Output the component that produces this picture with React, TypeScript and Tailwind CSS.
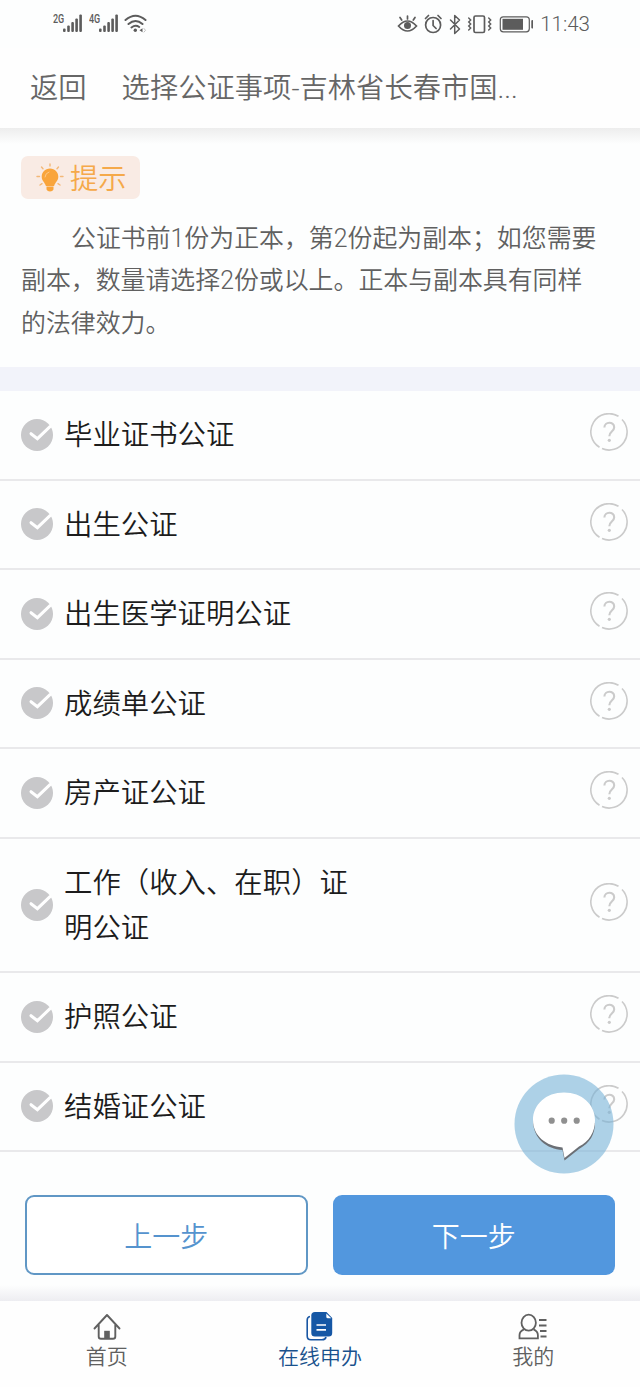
const SANS = "font-[Roboto,'Noto_Sans_CJK_SC',sans-serif]";

function Signal() {
  return (
    <svg width="22" height="20" viewBox="0 0 22 20" fill="#5c5c5c">
      <rect x="1" y="15.500" width="2.600" height="3.500" rx="1" />
      <rect x="5.200" y="12.500" width="2.600" height="6.500" rx="1" />
      <rect x="9.300" y="9" width="2.600" height="10" rx="1" />
      <rect x="13.300" y="5.500" width="2.600" height="13.500" rx="1" />
      <rect x="17.300" y="1.500" width="2.600" height="17.500" rx="1" />
    </svg>
  );
}

function StatusBar() {
  return (
    <div className="flex h-12 shrink-0 items-start justify-between pl-[53px] pr-[50px] pt-[13px] text-[#5c5c5c]">
      <div className="flex">
        <span className="w-[9px] origin-left scale-x-[0.75] text-[12px] font-medium leading-[12px]">2G</span>
        <Signal />
        <span className="ml-[5px] w-[9px] origin-left scale-x-[0.75] text-[12px] font-medium leading-[12px]">4G</span>
        <Signal />
        <svg className="ml-[4px]" width="24" height="22" viewBox="0 0 24 22" fill="none" stroke="#5c5c5c" strokeWidth="2" strokeLinecap="round">
          <path d="M1.500 7Q11.500-1.500 21.500 7M4.500 11Q11.500 5 18.500 11M7.500 14.500Q11.500 11.300 15.200 14" />
          <circle cx="11.300" cy="17.300" r="1.700" fill="#5c5c5c" stroke="none" />
          <path d="m15.500 17.300 3-2v4Z" fill="#5c5c5c" stroke="none" />
          <path d="m20 15.500 1.500 1.800-1.500 1.800" strokeWidth="0.800" stroke="#b0b0b0" />
        </svg>
      </div>
      <div className="flex">
        <svg width="136" height="24" viewBox="397.500 12.500 136 24" fill="none" stroke="#5c5c5c" strokeWidth="1.700" strokeLinecap="round">
          <path d="M399 25.500q9-10 18 0q-9 10-18 0ZM408 15.500v3M400.500 17l1.700 2.500M415.500 17l-1.700 2.500" />
          <circle cx="408" cy="25" r="3.500" fill="#5c5c5c" stroke="none" />
          <circle cx="433.600" cy="24.500" r="7.500" />
          <path d="M433.600 20v5l3 3M426 18l3-3M438.500 15l3 3" />
          <path d="m451 19.500 9 9-4.800 4.500V15l4.800 4.500-9 9" strokeWidth="1.500" strokeLinejoin="round" />
          <rect x="474.500" y="15.500" width="10.500" height="16.500" rx="1.500" />
          <path d="m469.200 17.500 2 2-2 2 2 2-2 2 2 2-2 2M489.200 17.500l2 2-2 2 2 2-2 2 2 2-2 2" strokeWidth="1.400" />
          <rect x="500.800" y="16.300" width="29" height="15" rx="3" strokeWidth="1.200" />
          <rect x="503" y="18.300" width="20.500" height="11" fill="#5c5c5c" stroke="none" />
          <path d="M532.800 20.500v6.500" strokeWidth="2" />
        </svg>
        <span className="ml-[7px] text-[20.500px] leading-[23px]">11:43</span>
      </div>
    </div>
  );
}

function Bulb() {
  return (
    <svg width="28" height="30" viewBox="0 0 28 30">
      <path d="M14 5.500c-5 0-8.300 3.700-8.300 8.200 0 4.100 3.200 5.700 4.200 9.300h8.200c1-3.600 4.200-5.200 4.200-9.300 0-4.500-3.300-8.200-8.300-8.200ZM10.500 23.500h7v3q-1 2-3.500 2t-3.500-2Z" fill="#f9a53c" />
      <path d="M9 14q.3-4 4-5" fill="none" stroke="#fcc98a" strokeLinecap="round" />
      <path d="M14 1v2M5.500 4l1.500 1.800M22.500 4 21 5.800M1 13.500h2.500M24.500 13.500H27M4 22l2-1.300M24 22l-2-1.300" stroke="#f3b878" strokeWidth="1.400" strokeLinecap="round" />
    </svg>
  );
}

function CheckCircle() {
  return (
    <svg className="shrink-0" width="32" height="32" viewBox="0 0 32 32">
      <circle cx="16" cy="16" r="16" fill="#c8c8ca" />
      <path d="m10 14.700 6.400 5L29 7.700" fill="none" stroke="#fff" strokeWidth="3" strokeLinecap="round" />
    </svg>
  );
}

function Help() {
  return (
    <svg className="shrink-0" width="38" height="38" viewBox="0 0 38 38" fill="none" stroke="#cbcbcb" strokeWidth="1.600">
      <path d="M28.500 3.300A18 18 0 0 0 9.500 34.300M12 35.600A18 18 0 0 0 32 6.500" />
      <path d="M14.400 14.500c0-6.200 9.800-6.200 9.800-.3 0 4.400-4.900 4.400-4.900 9" strokeWidth="2.100" />
      <circle cx="19.300" cy="27.300" r="1.600" fill="#cbcbcb" stroke="none" />
    </svg>
  );
}

function Item({ lines }: { lines: string[] }) {
  return (
    <div className="flex items-center border-b-2 border-[#e9e9eb] pl-[21px] pr-3">
      <CheckCircle />
      <div className="ml-[11px] flex-1 whitespace-nowrap pb-[20.5px] pt-[22px] text-[28.4px] leading-[45px] text-[#1c1c1c]">
        {lines.map((line) => (
          <div key={line}>{line}</div>
        ))}
      </div>
      <div className="-mt-[5px]">
        <Help />
      </div>
    </div>
  );
}

function ChatButton() {
  return (
    <button className="absolute left-[514px] top-[1074px] h-[100px] w-[100px]" aria-label="在线客服">
      <svg width="100" height="100" viewBox="0 0 100 100">
        <circle cx="50" cy="50" r="49.500" fill="#78b3d7" fillOpacity="0.600" />
        <path d="M19 46c0 19 14 29 29.500 30l2 10.500L65 75c11-6 16-15 16-26Z" fill="#6b6f75" />
        <path d="M50 18.500c-18 0-31 12-31 27.500 0 16 13 26 29.500 27.500l2 10.500L65 72.500c10-5 16-14 16-26.500 0-15.500-13-27.500-31-27.500Z" fill="#fff" />
        <g fill="#909090">
          <circle cx="37.700" cy="46.700" r="3.100" />
          <circle cx="50.200" cy="46.700" r="3.100" />
          <circle cx="62.700" cy="46.700" r="3.100" />
        </g>
      </svg>
    </button>
  );
}

function HomeIcon() {
  return (
    <svg width="30" height="30" viewBox="0 0 30 30" fill="none" stroke="#606060" strokeWidth="1.900" strokeLinejoin="round" strokeLinecap="round">
      <path d="M2.500 17.500 15 4l12.500 13.500M6.700 14v11.500q0 2.300 2.300 2.300h12q2.300 0 2.300-2.300V14" />
      <path d="M12.200 27.500v-7.700h5.600v7.700Z" fill="#606060" stroke="none" />
    </svg>
  );
}

function DocsIcon() {
  return (
    <svg width="30" height="30" viewBox="0 0 30 30" fill="none">
      <path d="M5 5.500q-2.800.5-2.800 3.500v16q0 3.700 3.700 3.700H17q3.500 0 4-2.700" stroke="#1956a3" strokeWidth="1.600" />
      <path d="M10 1h11.500l5.700 6v15q0 3.500-3.500 3.500H10q-3.700 0-3.700-3.500V4.500Q6.300 1 10 1Z" fill="#1557a5" />
      <path d="M21.300 2.500v3.200q0 1.500 1.500 1.500h3.500Z" fill="#fff" />
      <path d="M11.500 14h9.500M11.500 18.800h9.500" stroke="#fff" strokeWidth="1.700" />
    </svg>
  );
}

function MeIcon() {
  return (
    <svg width="30" height="30" viewBox="0 0 30 30" fill="none" stroke="#606060" strokeWidth="1.800">
      <ellipse cx="10.700" cy="11.700" rx="7.200" ry="8" />
      <path d="M6 18.300q-4.500 1.700-4.500 6v3h18.400v-3q0-4.300-4.400-6M21 9h7.500M21 14.500h7.500M22 20h6.500M22.500 25.500h6" />
    </svg>
  );
}

const items = [
  ["毕业证书公证"],
  ["出生公证"],
  ["出生医学证明公证"],
  ["成绩单公证"],
  ["房产证公证"],
  ["工作（收入、在职）证", "明公证"],
  ["护照公证"],
  ["结婚证公证"],
];

const tabs = [
  { label: "首页", icon: <HomeIcon />, color: "text-[#606060]" },
  { label: "在线申办", icon: <DocsIcon />, color: "text-[#19518c]" },
  { label: "我的", icon: <MeIcon />, color: "text-[#606060]" },
];

export default function App() {
  return (
    <div className={`relative flex h-[1387px] w-[640px] flex-col overflow-hidden bg-[#fdfefe] font-[350] ${SANS}`}>
      <StatusBar />
      <header className="flex h-20 shrink-0 items-center whitespace-nowrap bg-[#fefefe] pl-[30px] pt-[3px] text-[28.3px] text-[#666]">
        <span>返回</span>
        <span className="ml-[35px]">选择公证事项-吉林省长春市国...</span>
      </header>
      <section className="h-[239px] shrink-0 bg-[linear-gradient(#ededed,#fdfefe_16px)] pl-[21px] pt-7">
        <div className="flex h-[43px] w-[119px] items-center rounded-[7px] bg-[#f9ebe4] pl-[15px] text-[28.3px] text-[#f5a94a]">
          <Bulb />
          <span className="ml-[6px] whitespace-nowrap pt-[5px]">提示</span>
        </div>
        <div className="mt-[18.500px] whitespace-nowrap text-[24.900px] leading-[42.600px] text-[#606060]">
          <div className="pl-[50px]">公证书前1份为正本，第2份起为副本；如您需要</div>
          <div>副本，数量请选择2份或以上。正本与副本具有同样</div>
          <div>的法律效力。</div>
        </div>
      </section>
      <div className="h-6 shrink-0 bg-[#f2f3fa]" />
      <main className="shrink-0">
        {items.map((lines) => (
          <Item key={lines[0]} lines={lines} />
        ))}
      </main>
      <div className="grid shrink-0 grid-cols-2 gap-[25px] px-[25px] pt-[43px] text-[28px]">
        <button className="h-20 rounded-[9px] border-2 border-[#6097c5] bg-white pt-[5px] text-[#5593ce]">上一步</button>
        <button className="h-20 rounded-[9px] bg-[#5297de] pt-[5px] text-white">下一步</button>
      </div>
      <div className="min-h-0 flex-1 bg-[linear-gradient(#fdfefe_10px,#ededf1)]" />
      <nav className="grid h-[86px] shrink-0 grid-cols-3 bg-[#fefefe] pt-[10px]">
        {tabs.map((tab) => (
          <div key={tab.label} className={`flex flex-col items-center text-[21px] leading-[30px] ${tab.color}`}>
            {tab.icon}
            <span className="pt-px">{tab.label}</span>
          </div>
        ))}
      </nav>
      <ChatButton />
    </div>
  );
}
